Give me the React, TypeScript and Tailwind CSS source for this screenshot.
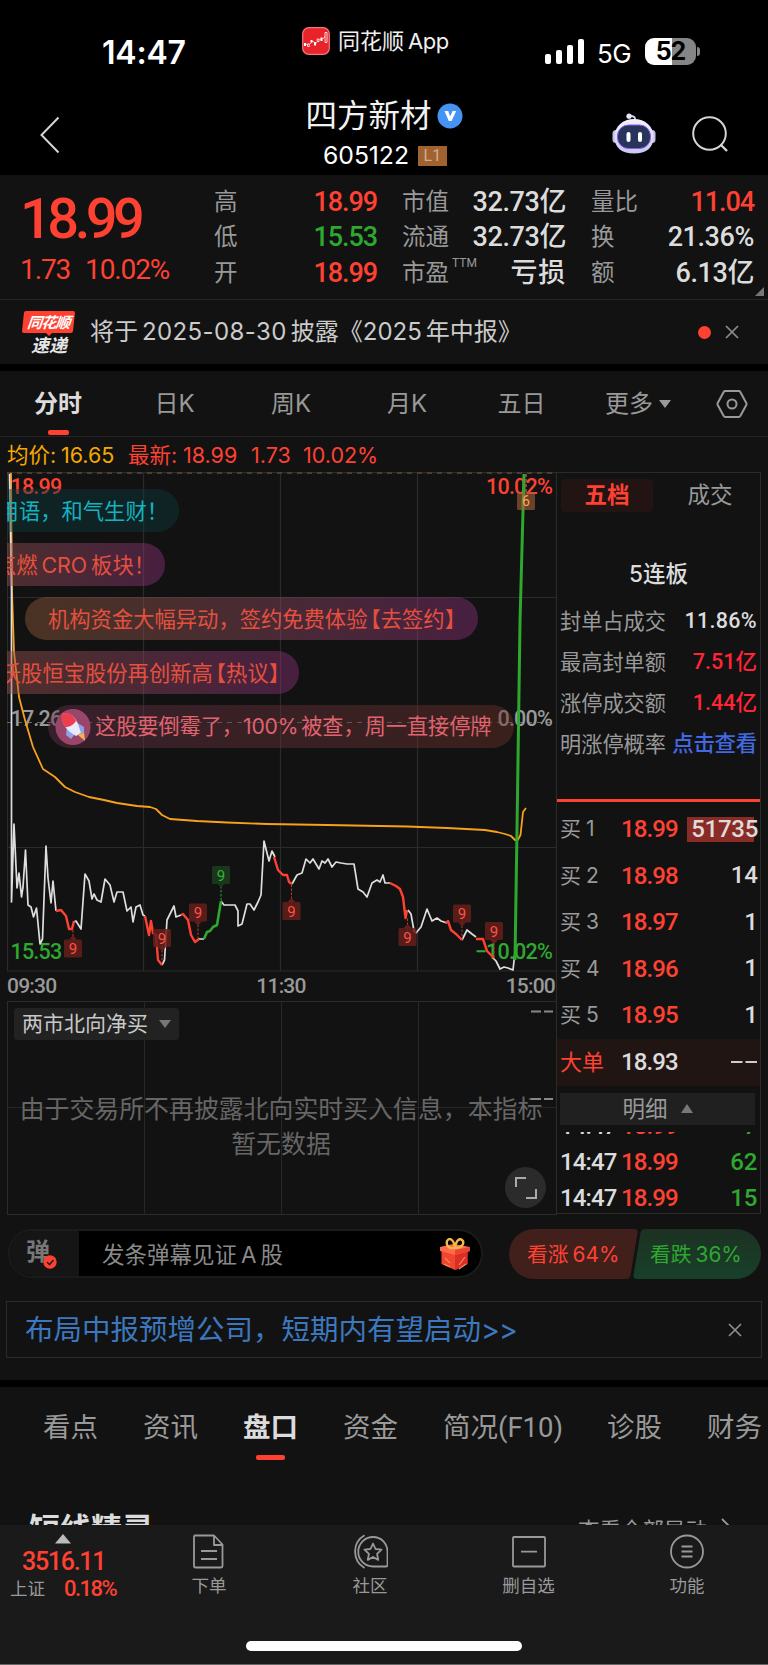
import React from "react";

const DIN = "font-[Roboto,'Noto_Sans_CJK_SC',sans-serif]";
const RED = "text-[#ff4132]";
const GREEN = "text-[#2fa82f]";
const LIGHT = "text-[#dcdcdc] tracking-[-0.4px]";

type Quote = { label: string; value: string; tone: string; sup?: string };

const quoteColumns: { box: string; rows: Quote[] }[] = [
  {
    box: "ml-[214px] w-[163px]",
    rows: [
      { label: "高", value: "18.99", tone: `${RED} tracking-[-1.1px]` },
      { label: "低", value: "15.53", tone: `${GREEN} tracking-[-1.1px]` },
      { label: "开", value: "18.99", tone: `${RED} tracking-[-1.1px]` },
    ],
  },
  {
    box: "ml-[25px] w-[164px]",
    rows: [
      { label: "市值", value: "32.73亿", tone: LIGHT },
      { label: "流通", value: "32.73亿", tone: LIGHT },
      { label: "市盈", value: "亏损", tone: "text-[#dcdcdc] tracking-[0.8px]", sup: "TTM" },
    ],
  },
  {
    box: "ml-[25px] w-[163px]",
    rows: [
      { label: "量比", value: "11.04", tone: `${RED} tracking-[-1.1px]` },
      { label: "换", value: "21.36%", tone: LIGHT },
      { label: "额", value: "6.13亿", tone: LIGHT },
    ],
  },
];

function StatusBar() {
  return (
    <div className="flex h-[80px] shrink-0 text-white">
      <div className="mt-[33px] ml-[102px] w-[199px] font-[Inter] text-[32px] leading-[40px] font-semibold tracking-[-0.2px]">14:47</div>
      <div className="mt-[25px] flex h-[32px] w-[244px] items-center">
        <svg width="28" height="28" viewBox="0 0 28 28" className="ml-px">
          <rect x="0.7" y="0.7" width="26.6" height="26.6" rx="6" fill="#e9232a" stroke="#f47a7c" strokeWidth="1.2" />
          <path d="M3.500 17.500 8 17l3-3 2.500 3 3-4 3-1 2.500-1 2.500-4" fill="none" stroke="#fff" strokeWidth="0.600" />
          <path d="M2 16h2v3H2zM8.500 13h2v2.500h-2zM12 15h2v3.500h-2zM18.500 10.500h2v3.500h-2z" fill="#fff" />
          <path d="M5.500 17h1.800v2.500H5.500zM15.200 12h1.800v2.500h-1.800zM23 5.500h2v10h-2z" fill="#e9232a" stroke="#fff" strokeWidth="0.800" />
        </svg>
        <span className="ml-[8px] font-[Inter,'Noto_Sans_CJK_SC',sans-serif] text-[22px] leading-[32px] whitespace-nowrap text-[#f0f0f0]">同花顺<span className="ml-[4px] tracking-[-0.4px]">App</span></span>
      </div>
      <div className="mt-[38px] flex h-[27px] items-center">
        <div className="flex h-[25px] items-end gap-[5px]">
          <i className="h-[10px] w-[6px] rounded-[2px] bg-white" />
          <i className="h-[14px] w-[6px] rounded-[2px] bg-white" />
          <i className="h-[19px] w-[6px] rounded-[2px] bg-white" />
          <i className="h-[25px] w-[6px] rounded-[2px] bg-white" />
        </div>
        <span className="mt-[4px] ml-[13px] w-[48px] font-[Inter] text-[26px] leading-[27px] tracking-[-0.5px]">5G</span>
        <div className="flex h-[27px] w-[51px] items-center justify-center rounded-[9px] bg-linear-to-r from-white from-52% to-[#858585] to-52% font-[Inter] text-[25px] leading-[27px] font-bold tracking-[-1px] text-black">52</div>
        <i className="ml-[1px] h-[9px] w-[3px] rounded-r-full bg-[#858585]" />
      </div>
    </div>
  );
}

function Robot() {
  return (
    <svg width="44" height="42" viewBox="0 0 44 42">
      <defs>
        <linearGradient id="shell" x1="0" y1="0" x2="0" y2="1">
          <stop offset="0" stopColor="#f4f2ff" />
          <stop offset="1" stopColor="#c9c8ee" />
        </linearGradient>
      </defs>
      <path d="M23 8V5.500q0-2-5-3" fill="none" stroke="#d6d5ee" strokeWidth="1.800" />
      <circle cx="17" cy="3.200" r="2.600" fill="#e8e7fa" />
      <rect x="0.500" y="17" width="7" height="13" rx="3.500" fill="#c4c3e6" />
      <rect x="36.500" y="17" width="7" height="13" rx="3.500" fill="#c4c3e6" />
      <path d="M22 6C33 6 41.500 13 41.500 24S34 40.500 22 40.500 2.500 35 2.500 24 11 6 22 6Z" fill="url(#shell)" />
      <rect x="5.500" y="12" width="33" height="23.500" rx="11" fill="#28345a" stroke="#8d5bf0" strokeWidth="1" />
      <rect x="14.500" y="19" width="4" height="10" rx="2" fill="#fff" />
      <rect x="26" y="19" width="4" height="10" rx="2" fill="#fff" />
    </svg>
  );
}

function TitleBar() {
  return (
    <div className="flex h-[95px] shrink-0 text-white">
      <svg width="20" height="38" viewBox="0 0 20 38" className="mt-[36px] ml-[40px]">
        <path d="M18.500 1.500 1.500 19l17 17.500" fill="none" stroke="#d5d5d5" strokeWidth="2" />
      </svg>
      <div className="mt-[17px] ml-[180px] flex w-[288px] flex-col items-center">
        <div className="flex h-[38px] items-center gap-[5px]">
          <span className="-mt-[6px] font-['Noto_Sans_CJK_SC',sans-serif] text-[31.5px] leading-[38px] text-[#f2f2f2]">四方新材</span>
          <svg width="26" height="26" viewBox="0 0 26 26">
            <circle cx="13" cy="13" r="12.500" fill="#4693f3" />
            <path d="M7.500 8h3.700l1.900 5.500L15.600 8h3.600l-4.600 10h-2.800Z" fill="#fff" />
          </svg>
        </div>
        <div className="mt-[6px] ml-[2px] flex h-[28px] items-center gap-[9px]">
          <span className="font-[Inter] text-[24.8px] leading-[28px] tracking-[-0.1px]">605122</span>
          <span className="mt-px h-[20px] w-[29px] bg-[#a0622f] text-center font-[Roboto] text-[16px] leading-[20px] text-[#cfae90]">L1</span>
        </div>
      </div>
      <div className="mt-[33px] ml-[84px]"><Robot /></div>
      <svg width="38" height="38" viewBox="0 0 38 38" className="mt-[35px] ml-[36px]">
        <circle cx="17.500" cy="18.500" r="16.300" fill="none" stroke="#d5d5d5" strokeWidth="2" />
        <path d="m28.500 29.500 6.500 6.500" stroke="#d5d5d5" strokeWidth="2.400" />
      </svg>
    </div>
  );
}

function Quotes() {
  return (
    <div className={`relative flex h-[125px] shrink-0 border-b border-[#252525] bg-[#121212] pt-[9px] ${DIN}`}>
      <div className={`absolute top-[13px] left-[20px] ${RED}`}>
        <div className="h-[60px] text-[56px] leading-[62px] font-medium tracking-[-4.500px]">18.99</div>
        <div className="mt-[8px] flex text-[28px] leading-[28px] tracking-[-1.1px]">
          <span className="w-[65px]">1.73</span>
          <span>10.02%</span>
        </div>
      </div>
      {quoteColumns.map((col, i) => (
        <div key={i} className={`flex flex-col ${col.box}`}>
          {col.rows.map((r) => (
            <div key={r.label} className="flex h-[35.600px] items-center">
              <span className="text-[23.5px] leading-[34px] text-[#999]">{r.label}</span>
              {r.sup && <span className="-mt-[20px] ml-[3px] text-[12px] leading-[12px] text-[#999]">{r.sup}</span>}
              <span className={`ml-auto text-[27px] leading-[34px] font-medium ${r.tone}`}>{r.value}</span>
            </div>
          ))}
        </div>
      ))}
      <svg width="9" height="9" viewBox="0 0 9 9" className="absolute right-[4px] bottom-[3px]">
        <path d="M9 0v9H0Z" fill="#777" />
      </svg>
    </div>
  );
}

function Cross({ className }: { className: string }) {
  return (
    <svg width="14" height="14" viewBox="0 0 14 14" className={className}>
      <path d="m1 1 12 12M13 1 1 13" stroke="#8d8d8d" strokeWidth="1.700" />
    </svg>
  );
}

function News() {
  return (
    <div className="flex h-[64px] shrink-0 items-center bg-[#121212]">
      <div className="ml-[22px] w-[54px] font-['Noto_Sans_CJK_SC',sans-serif] font-black text-[#e6e6e6] italic">
        <div className="ml-px h-[22px] w-[51px] -skew-x-6 rounded-[2px] bg-[#ff4132] text-center text-[15px] leading-[21px] font-bold tracking-[-0.900px] text-white">同花顺</div>
        <div className="mx-auto size-0 border-x-[3px] border-t-[3px] border-x-transparent border-t-[#ff4132]" />
        <div className="-mt-[2px] h-[20px] text-center text-[18px] leading-[20px] font-bold">速递</div>
      </div>
      <div className="ml-[14px] font-[Inter,'Noto_Sans_CJK_SC',sans-serif] text-[24px] leading-[32px] whitespace-nowrap text-[#cbcbcb]">
        将于<span className="mx-[4px] tracking-[0.4px]">2025-08-30</span>披露《<span className="mr-[4px]">2025</span>年中报》
      </div>
      <i className="ml-auto size-[13px] rounded-full bg-[#ff4132]" />
      <Cross className="mr-[29px] ml-[14px]" />
    </div>
  );
}

const periods = ["日K", "周K", "月K", "五日"];

function PeriodTabs() {
  return (
    <div className="grid h-[66px] shrink-0 grid-cols-[116px_117px_116px_116px_113px_118px_72px] border-b border-[#242424] bg-[#121212] text-center font-[Inter,'Noto_Sans_CJK_SC',sans-serif] text-[24px] leading-[66px] text-[#999]">
      <div className="flex flex-col items-center">
        <span className="h-[59px] font-bold text-[#dcdcdc]">分时</span>
        <i className="h-[5px] w-[21px] rounded-[2px] bg-[#ff4132]" />
      </div>
      {periods.map((p) => (
        <span key={p} className="whitespace-nowrap">{p}</span>
      ))}
      <span className="flex items-center pl-[27px]">
        更多
        <svg width="12" height="8" viewBox="0 0 12 8" className="ml-[6px]"><path d="M0 0h12L6 8Z" fill="#999" /></svg>
      </span>
      <span className="flex items-center pl-[20px]">
        <svg width="32" height="30" viewBox="0 0 32 30" fill="none" stroke="#999" strokeWidth="2">
          <path d="M9.200 2h13.600q1 0 1.500.9l6 11.100q.5 1 0 2l-6 11.100q-.5.9-1.500.9H9.200q-1 0-1.500-.9L1.700 16q-.5-1 0-2l6-11.100Q8.200 2 9.200 2Z" />
          <circle cx="16" cy="15" r="4.500" />
        </svg>
      </span>
    </div>
  );
}

function InfoLine() {
  return (
    <div className={`flex h-[35px] shrink-0 items-center bg-[#121212] pl-[7px] font-[Inter,'Noto_Sans_CJK_SC',sans-serif] text-[21.5px] leading-[34px] whitespace-nowrap ${RED}`}>
      <span className="w-[54px] text-[#f5a800]">均价:</span>
      <span className="w-[67px] text-[#f5a800]">16.65</span>
      <span className="w-[55px]">最新:</span>
      <span className="w-[68px]">18.99</span>
      <span className="w-[52px]">1.73</span>
      <span>10.02%</span>
    </div>
  );
}

const markers = [
  { x: 66, y: 476.5, tip: "up", from: 457 },
  { x: 155, y: 466, tip: "down", from: 491 },
  { x: 191, y: 440.5, tip: "down", from: 466 },
  { x: 284.5, y: 439, tip: "up", from: 412 },
  { x: 400.5, y: 465, tip: "up", from: 446 },
  { x: 455, y: 441.5, tip: "down", from: 467 },
  { x: 487, y: 459, tip: "down", from: 485 },
];

function PriceChart() {
  const label = "Roboto, sans-serif";
  return (
    <svg width="550" height="500" viewBox="0 0 550 500" className="block">
      <g stroke="#2b2b2b" strokeWidth="1.200" fill="none">
        <path d="M0.500 0.600H549.500V499H0.500ZM136.500 0V499M273.500 0V499M410.500 0V499M0 125.500H549M0 375.500H549" />
      </g>
      <path d="M0 1H549" stroke="#594832" strokeWidth="1.500" strokeDasharray="5 5" />
      <path d="M0 250.500H549" stroke="#666" strokeWidth="1.200" strokeDasharray="5 5" />
      <g fontFamily={label} fontSize="21.500" fontWeight="500" letterSpacing="-0.800">
        <text x="3.500" y="21.500" fill="#ff4132">18.99</text>
        <text x="545" y="21.500" fill="#ff4132" textAnchor="end">10.02%</text>
        <text x="3.500" y="254" fill="#999">17.26</text>
        <text x="545" y="254" fill="#999" textAnchor="end">0.00%</text>
        <text x="3.500" y="487" fill="#2fa82f">15.53</text>
        <text x="545" y="487" fill="#2fa82f" textAnchor="end">−10.02%</text>
      </g>
      <path d="M4 1 5 120 7 180 12 225 18 248 26 275 36 297 48 305 58 315 68 320 82 325 97 328 110 331 130 334 143 335 149 337 155 343 163 347 190 349 220 350.500 260 352 320 353 400 354.500 440 356 478 358 490 360 498 362 504 364 508 368 511 367.500 513.500 363 516 340 519 336" fill="none" stroke="#f7a11d" strokeWidth="1.800" strokeLinejoin="round" />
      <g fill="none" stroke="#dedede" strokeWidth="1.700" strokeLinejoin="round">
        <path d="M2.500 2 4.500 120 4.500 430 7 352 10 416 12 401 14.500 425 16 415 18.500 378 21 433 24 435 26.500 445 29.500 436 33 472 35.500 467 39 374 41 406 44 431 46 409 49 439M66.500 450 69 449 74 457 78 402 82 409 85 427 87 422 90 428 94 430 98 407 103 413 107 430 110 420 116 420 120 439 124 435 126 450 129 435 133 433 136 443 138 444M155 493 157.500 488 160 448 164 440 167 434 169 445 174 443M191 467 197 467M214 429 217 433 228 433 231 439 231 454 235 452 240 432 243 432 247 438 251 430 254 423 257 369 262 389 265 379 268 385M285 412 290 403 295 401 299 387 303 391 306 387 312 397 315 389 318 391 321 387 325 395 329 390 334 391 340 392 347 392 351 417 356 420 360 425 365 411 370 408 373 410 376 403 378 411 383 411M401 438 404 442 407 459 409 461 414 455 420 437 425 449 430 446 434 449 440 451M455 468 460 458 465 462 469 465M486 486 489 489 493 497 497 495 501 496 506 498 508 480" />
        <g stroke="#ff4132" strokeWidth="2.400">
          <path d="M49 439 54 438 59 444 62 457 65 457 67 449M138 444 142 463 144 449 146 461 149 463 151 488 155 493M174 443 176 442 181 448 184 463 188 470 192 467M267 385 271 398 276 403 280 403 282 410 285 412M383 411 389 414 393 417 396 425 398.500 446 400 438M439 451 441 449 444 458 449 462 455 468M469 467 476 467 480 479 487 486" />
        </g>
        <path d="M197 467 200 460 203 459 206 455 210 453 214 429" stroke="#2fa82f" strokeWidth="2.600" />
        <path d="M508 488 510 358 513 150 517 2" stroke="#2fa82f" strokeWidth="3" />
      </g>
      {markers.map((m) => (
        <g key={m.x}>
          <path d={`M${m.x} ${m.y}V${m.from}`} stroke="#c43a30" strokeWidth="1" strokeDasharray="2.500 1.500" />
          <rect x={m.x - 9} y={m.y - 9} width="18" height="18" rx="1.500" fill="#651f1b" fillOpacity="0.850" />
          <path
            d={m.tip === "up" ? `M${m.x - 4} ${m.y - 9}l4-4 4 4Z` : `M${m.x - 4} ${m.y + 9}l4 4 4-4Z`}
            fill="#651f1b"
          />
          <text x={m.x} y={m.y + 5.500} fontFamily={label} fontSize="15" textAnchor="middle" fill="#ff5144">9</text>
        </g>
      ))}
      <path d="M214 410V428" stroke="#2fa82f" strokeWidth="1" strokeDasharray="2.500 1.500" />
      <rect x="205" y="394" width="18" height="18" rx="1.500" fill="#19381b" />
      <path d="M210 411.500l4 4 4-4Z" fill="#19381b" />
      <text x="214" y="408.500" fontFamily={label} fontSize="15" textAnchor="middle" fill="#38b038">9</text>
      <path d="M519 2V20" stroke="#8a6745" strokeWidth="1.500" strokeDasharray="3 2" />
      <rect x="510" y="20" width="18" height="18" rx="1.500" fill="#a36439" fillOpacity="0.600" />
      <text x="519" y="34" fontFamily={label} fontSize="14" textAnchor="middle" fill="#ffa558">6</text>
    </svg>
  );
}

function Rocket() {
  return (
    <svg width="36" height="38" viewBox="0 0 36 38" className="ml-[7px] shrink-0">
      <ellipse cx="18" cy="19" rx="17.500" ry="18" fill="#9b456a" />
      <path d="m23 27 7 6-1-9Z" fill="#f6b547" />
      <path d="m12 18-1 9 5 4 4-5ZM21 14l8 5v7l-6-2Z" fill="#8fa3e6" />
      <path d="M7 6c7-3 13 3 16 10l3 9-5 3-6-4C10 20 6 13 7 6Z" fill="#e9e9ff" />
      <path d="M7 6c6-3 11 1 14 7-3 4-6 6-11 6C7 14 6 10 7 6Z" fill="#ec3f4b" />
    </svg>
  );
}

const bubble = "absolute flex h-[43px] items-center whitespace-nowrap";

function Danmaku() {
  return (
    <div className="absolute inset-0 overflow-hidden font-[Inter,'Noto_Sans_CJK_SC',sans-serif] text-[21.300px] leading-[32px] text-[#e5503e]">
      <div className={`${bubble} top-[17px] right-[378px] rounded-r-full bg-[#0d3a3e]/45 pr-[11px] pl-[20px] text-[#12b3c0]`}>用语，和气生财！</div>
      <div className={`${bubble} top-[71px] right-[392px] rounded-r-full bg-linear-to-r from-[#995445]/45 to-[#8a2f78]/45 pr-[10px] pl-[20px]`}>点燃<span className="mx-[4px]">CRO</span>板块！</div>
      <div className={`${bubble} top-[125px] left-[18px] w-[453px] rounded-full bg-linear-to-r from-[#8e5b37]/45 to-[#8a2f78]/45 pl-[23px]`}>机构资金大幅异动，签约免费体验<span className="-ml-[8px]">【去签约】</span></div>
      <div className={`${bubble} top-[179px] right-[258px] rounded-r-full bg-linear-to-r from-[#995445]/45 to-[#8a2f78]/45 pr-[9px] pl-[20px]`}>沃股恒宝股份再创新高<span className="-ml-[8px]">【热议】</span></div>
      <div className={`${bubble} top-[233px] left-[41px] w-[466px] rounded-full bg-linear-to-r from-[#643149]/45 to-[#6b3128]/45 text-[21.150px] text-[#e0636f]`}>
        <Rocket />
        <span className="ml-[4px]">这股要倒霉了，<span className="mr-[3px] tracking-[-0.2px]">100%</span>被查，周一直接停牌</span>
      </div>
    </div>
  );
}

function NorthboundPanel() {
  return (
    <div className="relative h-[214px] w-[550px] border border-[#2b2b2b] font-[Inter,'Noto_Sans_CJK_SC',sans-serif]">
      <div className="absolute inset-0 grid grid-cols-4 grid-rows-2">
        {[0, 1, 2, 3, 4, 5, 6, 7].map((i) => (
          <i key={i} className={`border-[#272727] ${i % 4 < 3 ? "border-r" : ""} ${i < 4 ? "border-b" : ""}`} />
        ))}
      </div>
      <div className="relative mt-[6px] ml-[6px] flex h-[32px] w-[165px] items-center rounded-[3px] bg-[#222] pl-[8px] text-[21px] leading-[32px] text-[#c8c8c8]">
        两市北向净买
        <svg width="12" height="8" viewBox="0 0 12 8" className="ml-[11px]"><path d="M0 0h12L6 8Z" fill="#777" /></svg>
      </div>
      <p className="relative mt-[52px] -ml-[2px] text-center text-[24.900px] leading-[34.500px] whitespace-nowrap text-[#666]">
        由于交易所不再披露北向实时买入信息，本指标
        <br />
        暂无数据
      </p>
      <svg width="24" height="100" viewBox="0 0 24 100" className="absolute top-[2px] right-[2px]">
        <path d="M1 7.500h10M14 7.500h9M1 95h10M14 95h9" stroke="#888" strokeWidth="2" />
      </svg>
      <div className="absolute right-[10px] bottom-[6px] flex size-[41px] items-center justify-center rounded-full bg-[#2b2b2b]">
        <svg width="22" height="22" viewBox="0 0 22 22" fill="none" stroke="#aaa" strokeWidth="2">
          <path d="M1 10V1h10M21 12v9H11" />
        </svg>
      </div>
    </div>
  );
}

const facts = [
  { k: "封单占成交", v: "11.86%", c: "text-[#dcdcdc] tracking-[0.3px]" },
  { k: "最高封单额", v: "7.51亿", c: "text-[#ff2436]" },
  { k: "涨停成交额", v: "1.44亿", c: "text-[#ff2436]" },
  { k: "明涨停概率", v: "点击查看", c: "text-[#4169e1] tracking-[-0.3px]" },
];

const bids = [
  ["1", "18.99", "51735"],
  ["2", "18.98", "14"],
  ["3", "18.97", "1"],
  ["4", "18.96", "1"],
  ["5", "18.95", "1"],
];

const trades = ["7", "62", "15"];

function OrderBook() {
  return (
    <div className="-ml-px h-[742px] w-[205px] border border-[#2b2b2b] font-[Inter,'Noto_Sans_CJK_SC',sans-serif] whitespace-nowrap">
      <div className="flex pt-[6px] pl-[4px] text-[22.500px] leading-[32px]">
        <span className="h-[33px] w-[92px] rounded-[4px] bg-[#211413] text-center font-bold text-[#ff4132]">五档</span>
        <span className="ml-[11px] w-[92px] text-center text-[#999]">成交</span>
      </div>
      <div className="mt-[46px] text-center text-[22.500px] leading-[32px] font-medium text-[#dcdcdc]">5连板</div>
      <div className="mt-[10px] flex h-[202px] flex-col border-b-[3px] border-[#ff4132]">
        {facts.map((f) => (
          <div key={f.k} className="flex h-[41px] shrink-0 items-center justify-between pr-[3px] pl-[3px]">
            <span className="text-[21.200px] leading-[32px] text-[#999]">{f.k}</span>
            <span className={`${DIN} text-[21.500px] leading-[32px] font-medium ${f.c}`}>{f.v}</span>
          </div>
        ))}
      </div>
      <div className="pt-[4px]">
        {bids.map(([n, price, vol]) => (
          <div key={n} className="flex h-[46.500px] items-center pr-[2px] pl-[3px] text-[#dcdcdc]">
            <span className="w-[61px] text-[21px] leading-[32px] text-[#999]">买<span className="ml-[5px]">{n}</span></span>
            <span className={`${DIN} text-[24px] leading-[30px] font-medium tracking-[-0.900px] ${RED}`}>{price}</span>
            <span className={`${DIN} ml-auto text-[24px] leading-[25px] font-medium ${vol === "51735" ? "bg-linear-to-r from-[#8a2b25] from-95% to-transparent to-95% pl-[4px] tracking-[-0.300px]" : ""}`}>{vol}</span>
          </div>
        ))}
      </div>
      <div className="flex h-[47px] items-center bg-[#211514] pr-[3px] pl-[3px]">
        <span className="w-[61px] text-[22px] leading-[32px] text-[#ff4132]">大单</span>
        <span className={`${DIN} text-[24px] leading-[30px] font-medium tracking-[-0.900px] text-[#dcdcdc]`}>18.93</span>
        <svg width="26" height="4" viewBox="0 0 26 4" className="ml-auto"><path d="M0 2h11.500M14.500 2H26" stroke="#ccc" strokeWidth="2" /></svg>
      </div>
      <div className="mt-[7px] ml-[3px] flex h-[32px] w-[195px] items-center justify-center bg-[#202020] text-[22.500px] leading-[32px] text-[#999]">
        明细
        <svg width="12" height="9" viewBox="0 0 12 9" className="ml-[13px]"><path d="M0 9h12L6 0Z" fill="#777" /></svg>
      </div>
      <div className="mt-[7px] h-[82px] overflow-hidden">
        <div className="-mt-[23px]">
          {trades.map((t) => (
            <div key={t} className={`${DIN} flex h-[35.700px] items-center pr-[3px] pl-[3px] text-[24px] leading-[32px] font-medium tracking-[-0.900px] text-[#dcdcdc]`}>
              <span className="w-[61px]">14:47</span>
              <span className={RED}>18.99</span>
              <span className={`ml-auto tracking-[-0.300px] ${GREEN}`}>{t}</span>
            </div>
          ))}
        </div>
      </div>
    </div>
  );
}

function Market() {
  return (
    <div className="flex h-[743px] shrink-0 bg-[#121212] pl-[7px]">
      <div className="w-[550px]">
        <div className="relative h-[500px]">
          <PriceChart />
          <Danmaku />
        </div>
        <div className={`flex h-[29px] items-center justify-between pr-[2px] text-[21px] leading-[29px] font-medium tracking-[-0.800px] text-[#999] ${DIN}`}>
          <span>09:30</span>
          <span>11:30</span>
          <span>15:00</span>
        </div>
        <NorthboundPanel />
      </div>
      <OrderBook />
    </div>
  );
}

function Gift() {
  return (
    <svg width="30" height="32" viewBox="0 0 30 32">
      <path d="M1.500 12v14L15 32l12.500-6V12Z" fill="#f0462f" />
      <path d="M15 15v17l12.500-6V12Z" fill="#d92f27" />
      <path d="m0 9 13-3 17 3v4l-15 4L0 13Z" fill="#ff694c" />
      <path d="m15 12 15-3v4l-15 4Z" fill="#e94332" />
      <path d="m5 20 5 5M4 26l6 3M19 27l6-8M19 31l7-5" stroke="#ff8a57" strokeWidth="1.200" />
      <path d="M15 10C8 11 6 7 7 3c2-4 7-2 8 7ZM15 10c7 0 9-4 8-7-3-4-7-1-8 7Z" fill="none" stroke="#f7b54a" strokeWidth="2.400" />
    </svg>
  );
}

function CommentBar() {
  return (
    <div className="flex h-[86px] shrink-0 bg-[#121212] pt-[14px] pl-[8px] font-[Inter,'Noto_Sans_CJK_SC',sans-serif] text-[22.500px] leading-[46px]">
      <div className="flex h-[49px] w-[475px] overflow-hidden rounded-full border-2 border-[#1b1b1b] bg-black">
        <div className="relative w-[69px] shrink-0 bg-[#151515] pl-[16px] text-[24px] leading-[42px] font-bold text-[#777]">
          弹
          <svg width="14" height="14" viewBox="0 0 14 14" className="absolute top-[24px] left-[33px]">
            <circle cx="7" cy="7" r="6.700" fill="#ff4132" />
            <path d="m4 7 2.500 2.500L10.500 5" fill="none" stroke="#222" strokeWidth="1.600" />
          </svg>
        </div>
        <span className="ml-[23px] leading-[47px] whitespace-nowrap text-[#898989]">发条弹幕见证<span className="mx-[4px]">A</span>股</span>
        <span className="mt-[7px] mr-[11px] ml-auto"><Gift /></span>
      </div>
      <div className="relative ml-[26px] flex h-[50px] w-[252px]">
        <svg width="252" height="50" viewBox="0 0 252 50" className="absolute inset-0">
          <defs>
            <linearGradient id="fall" x1="0" y1="0" x2="0" y2="1">
              <stop offset="0" stopColor="#1d3123" />
              <stop offset="1" stopColor="#17402a" />
            </linearGradient>
          </defs>
          <path d="M25 0h100q4 0 3.500 4l-7 42q-.7 4-4.500 4H25a25 25 0 0 1 0-50Z" fill="#41201c" />
          <path d="M136 0h91a25 25 0 0 1 0 50H128q-4 0-3.500-4l7-42q.7-4 4.500-4Z" fill="url(#fall)" />
        </svg>
        <span className={`relative w-[123px] pl-[18px] text-[20.800px] leading-[51px] whitespace-nowrap ${RED}`}>看涨<span className="ml-[4px]">64%</span></span>
        <span className={`relative pl-[18px] text-[20.800px] leading-[51px] whitespace-nowrap ${GREEN}`}>看跌<span className="ml-[4px]">36%</span></span>
      </div>
    </div>
  );
}

function Banner() {
  return (
    <div className="h-[79px] shrink-0 bg-[#121212] px-[6px]">
      <div className="flex h-[57px] items-center border border-[#2b2b2b] pl-[18px] font-[Inter,'Noto_Sans_CJK_SC',sans-serif] text-[28.500px] leading-[56px] whitespace-nowrap text-[#3c78bf]">
        布局中报预增公司，短期内有望启动<span className="tracking-[-0.900px]">&gt;&gt;</span>
        <Cross className="mr-[19px] ml-auto" />
      </div>
    </div>
  );
}

const sections = ["看点", "资讯", "盘口", "资金", "简况(F10)", "诊股", "财务"];

function SectionTabs() {
  return (
    <div className="h-[138px] shrink-0 overflow-hidden bg-[#121212] font-[Roboto,'Noto_Sans_CJK_SC',sans-serif]">
      <div className="grid h-[128px] grid-cols-[100px_100px_100px_100px_164px_100px_80px] pt-[17px] pl-[43px] text-[27.500px] leading-[48px] whitespace-nowrap text-[#999]">
        {sections.map((s) =>
          s === "盘口" ? (
            <div key={s} className="w-[55px] font-bold text-[#dcdcdc]">
              {s}
              <i className="mx-auto mt-[3px] block h-[5px] w-[29px] rounded-[2px] bg-[#ff4132]" />
            </div>
          ) : (
            <span key={s}>{s}</span>
          ),
        )}
      </div>
      <div className="flex h-[40px] justify-between pr-[37px] pl-[29px]">
        <span className="-mt-[5px] text-[31px] leading-[40px] font-bold text-[#dcdcdc]">短线精灵</span>
        <span className="flex text-[21.500px] leading-[32px] text-[#999]">
          查看全部异动
          <svg width="10" height="18" viewBox="0 0 10 18" className="mt-[3px] ml-[14px]"><path d="m1 1 8 8-8 8" fill="none" stroke="#999" strokeWidth="1.800" /></svg>
        </span>
      </div>
    </div>
  );
}

const navItems = [
  {
    name: "下单",
    view: "0 0 34 35",
    art: <path d="M3 1.500h19l8.500 9V32q0 1.500-1.500 1.500H3.500Q2 33.500 2 32V3q0-1.500 1-1.500ZM22 2v9h8M9 17h16M9 25h16" />,
  },
  {
    name: "社区",
    view: "2 0 36 35",
    art: (
      <path d="M14.500 1.200A19 19 0 0 0 14.500 34M23 3c8.500 0 14.500 6.500 14.500 15v13q0 1.500-1.500 1.500H23A14.700 14.700 0 0 1 23 3ZM23 9.500l2.500 5.500 6 .7-4.400 4.200 1.100 6L23 23l-5.200 2.900 1.100-6-4.400-4.200 6-.7Z" />
    ),
  },
  {
    name: "删自选",
    view: "0 0 34 35",
    art: <path d="M2 3h30q1 0 1 1v27.500q0 1-1 1H2q-1 0-1-1V4q0-1 1-1ZM9 17.700h16" />,
  },
  {
    name: "功能",
    view: "0 0 34 35",
    art: <path d="M17 1.500a16 16 0 1 1 0 32 16 16 0 0 1 0-32ZM11.500 12.500h11M11.500 17.500h11M11.500 22.500h11" />,
  },
];

function BottomNav() {
  return (
    <div className="flex h-[140px] shrink-0 flex-col border-b border-[#666] bg-[#1a1a1a] font-[Roboto,'Noto_Sans_CJK_SC',sans-serif]">
      <div className="flex h-[115px]">
        <div className="flex w-[130px] flex-col pl-[10px]">
          <svg width="16" height="10" viewBox="0 0 16 10" className="mt-[9px] ml-[45px]"><path d="M8 0l8 9.500H0Z" fill="#bbb" /></svg>
          <span className={`mt-[4px] ml-[12px] text-[25px] leading-[28px] font-medium tracking-[-1.300px] ${RED}`}>3516.11</span>
          <span className="mt-px flex items-center text-[17.500px] leading-[24px] text-[#999]">
            上证
            <span className={`ml-[19px] text-[22px] leading-[24px] font-medium tracking-[-1.500px] ${RED}`}>0.18%</span>
          </span>
        </div>
        <div className="grid grow grid-cols-[160px_162px_155px_162px]">
          {navItems.map((n) => (
            <div key={n.name} className="flex flex-col items-center pt-[9px]">
              <svg width={n.name === "社区" ? 36 : 34} height="35" viewBox={n.view} fill="none" stroke="#999" strokeWidth="1.800" strokeLinejoin="round">
                {n.art}
              </svg>
              <span className="mt-[4px] text-[17.500px] leading-[26px] text-[#999]">{n.name}</span>
            </div>
          ))}
        </div>
      </div>
      <i className="mx-auto mt-px h-[10px] w-[276px] rounded-full bg-white" />
    </div>
  );
}

export default function App() {
  return (
    <div className="flex h-[1665px] w-[768px] flex-col overflow-hidden bg-black">
      <StatusBar />
      <TitleBar />
      <Quotes />
      <News />
      <div className="h-[7px] shrink-0" />
      <PeriodTabs />
      <InfoLine />
      <Market />
      <CommentBar />
      <Banner />
      <div className="h-[7px] shrink-0" />
      <SectionTabs />
      <BottomNav />
    </div>
  );
}
